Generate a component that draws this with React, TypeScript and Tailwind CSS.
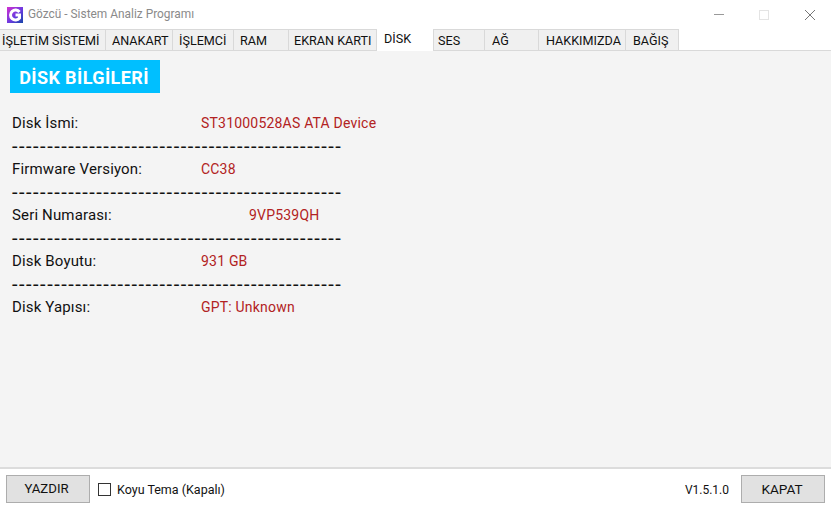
const tabs = [
  { label: "İŞLETİM SİSTEMİ", width: "w-[106px]", pad: "pl-[2px]" },
  { label: "ANAKART", width: "w-[67px]", pad: "pl-[6px]" },
  { label: "İŞLEMCİ", width: "w-[61px]", pad: "pl-[6px]" },
  { label: "RAM", width: "w-[55px]", pad: "pl-[6px]" },
  { label: "EKRAN KARTI", width: "w-[88px]", pad: "pl-[5px]" },
  { label: "DİSK", width: "w-[56px]", pad: "pl-[7px]", active: true },
  { label: "SES", width: "w-[52px]", pad: "border-l pl-[4px]" },
  { label: "AĞ", width: "w-[54px]", pad: "pl-[7px]" },
  { label: "HAKKIMIZDA", width: "w-[87px]", pad: "pl-[7px]" },
  { label: "BAĞIŞ", width: "w-[53px]", pad: "pl-[7px]" },
];

const rows = [
  { label: "Disk İsmi:", value: "ST31000528AS ATA Device", pad: "pl-[201px]" },
  { label: "Firmware Versiyon:", value: "CC38", pad: "pl-[201px]" },
  { label: "Seri Numarası:", value: "9VP539QH", pad: "pl-[249px]" },
  { label: "Disk Boyutu:", value: "931 GB", pad: "pl-[201px]" },
  { label: "Disk Yapısı:", value: "GPT: Unknown", pad: "pl-[201px]" },
];

const dashes = "-----------------------------------------------";

const App = () => {
  return (
    <div className="flex h-[508px] w-[831px] flex-col overflow-hidden bg-white font-['Roboto',sans-serif] text-[12.6px] text-[#111]">
      {/* title bar */}
      <div className="flex h-[29px] items-center">
        <svg className="ml-[7px] h-[16px] w-[16px]" viewBox="0 0 16 16">
          <defs>
            <linearGradient id="logo" x1="0" y1="0" x2="1" y2="1">
              <stop offset="0" stopColor="#d32fd0" />
              <stop offset="0.55" stopColor="#6a3be0" />
              <stop offset="1" stopColor="#1646a8" />
            </linearGradient>
          </defs>
          <rect width="16" height="16" fill="url(#logo)" />
          <path d="M12.5 5 A5 5 0 1 0 12.5 11 V8 H8.5" fill="none" stroke="#fff" strokeWidth="3" />
        </svg>
        <span className="ml-[5px] text-[11.9px] text-[#8a8a8a]">Gözcü - Sistem Analiz Programı</span>
        <div className="ml-auto flex items-center">
          <div className="mr-[35px] h-px w-[10px] bg-[#999]" />
          <div className="mr-[36px] h-[10px] w-[10px] border border-[#e4e4e4]" />
          <svg className="mr-[16px] h-[10px] w-[10px]" viewBox="0 0 10 10">
            <path d="M0 0 L10 10 M10 0 L0 10" stroke="#777" strokeWidth="1" />
          </svg>
        </div>
      </div>

      {/* tabs */}
      <div className="flex h-[22px] border-b border-[#d9d9d9]">
        {tabs.map((tab) =>
          tab.active ? (
            <div key={tab.label} className={`${tab.width} ${tab.pad} relative z-10 h-[22px] bg-white leading-[20px]`}>
              {tab.label}
            </div>
          ) : (
            <div
              key={tab.label}
              className={`${tab.width} ${tab.pad} h-[21px] whitespace-nowrap border-t border-r border-[#d9d9d9] bg-[#f0f0f0] leading-[22px]`}
            >
              {tab.label}
            </div>
          ),
        )}
      </div>

      {/* content */}
      <div className="flex-1 bg-[#f4f4f4]">
        <div className="ml-[10px] mt-[9px] flex h-[33px] w-[150px] items-center justify-center bg-[#00bfff] pr-[2px] pt-[1px] text-[18px] font-bold tracking-[0.4px] text-white">
          DİSK BİLGİLERİ
        </div>
        <div className="mt-[19px] pl-[12px] text-[15px] tracking-[0.15px]">
          {rows.map((row, i) => (
            <div key={row.label}>
              <div className="relative h-[23px] leading-[23px]">
                <span>{row.label}</span>
                <span className={`${row.pad} absolute -left-[12px] top-0 whitespace-nowrap text-[14px] tracking-[0.2px] text-[#b22222]`}>
                  {row.value}
                </span>
              </div>
              {i < rows.length - 1 && (
                <div className="h-[23px] whitespace-nowrap text-[20px] leading-[23px] tracking-[1.5px]">{dashes}</div>
              )}
            </div>
          ))}
        </div>
      </div>

      {/* footer */}
      <div className="flex h-[41px] items-center border-t-2 border-[#dcdcdc] pl-[6px] pr-[6px] pt-[1px]">
        <button className="h-[28px] w-[84px] border border-[#adadad] bg-[#e1e1e1] pr-[3px] text-[13.2px]">YAZDIR</button>
        <div className="ml-[8px] h-[13px] w-[13px] border border-[#333] bg-white" />
        <span className="ml-[6px] pt-[2px] text-[12.5px]">Koyu Tema (Kapalı)</span>
        <span className="ml-auto pt-[2px] text-[12px]">V1.5.1.0</span>
        <button className="ml-[12px] h-[28px] w-[84px] border border-[#adadad] bg-[#e1e1e1] pr-[2px] text-[13.6px]">KAPAT</button>
      </div>
    </div>
  );
};

export default App;
